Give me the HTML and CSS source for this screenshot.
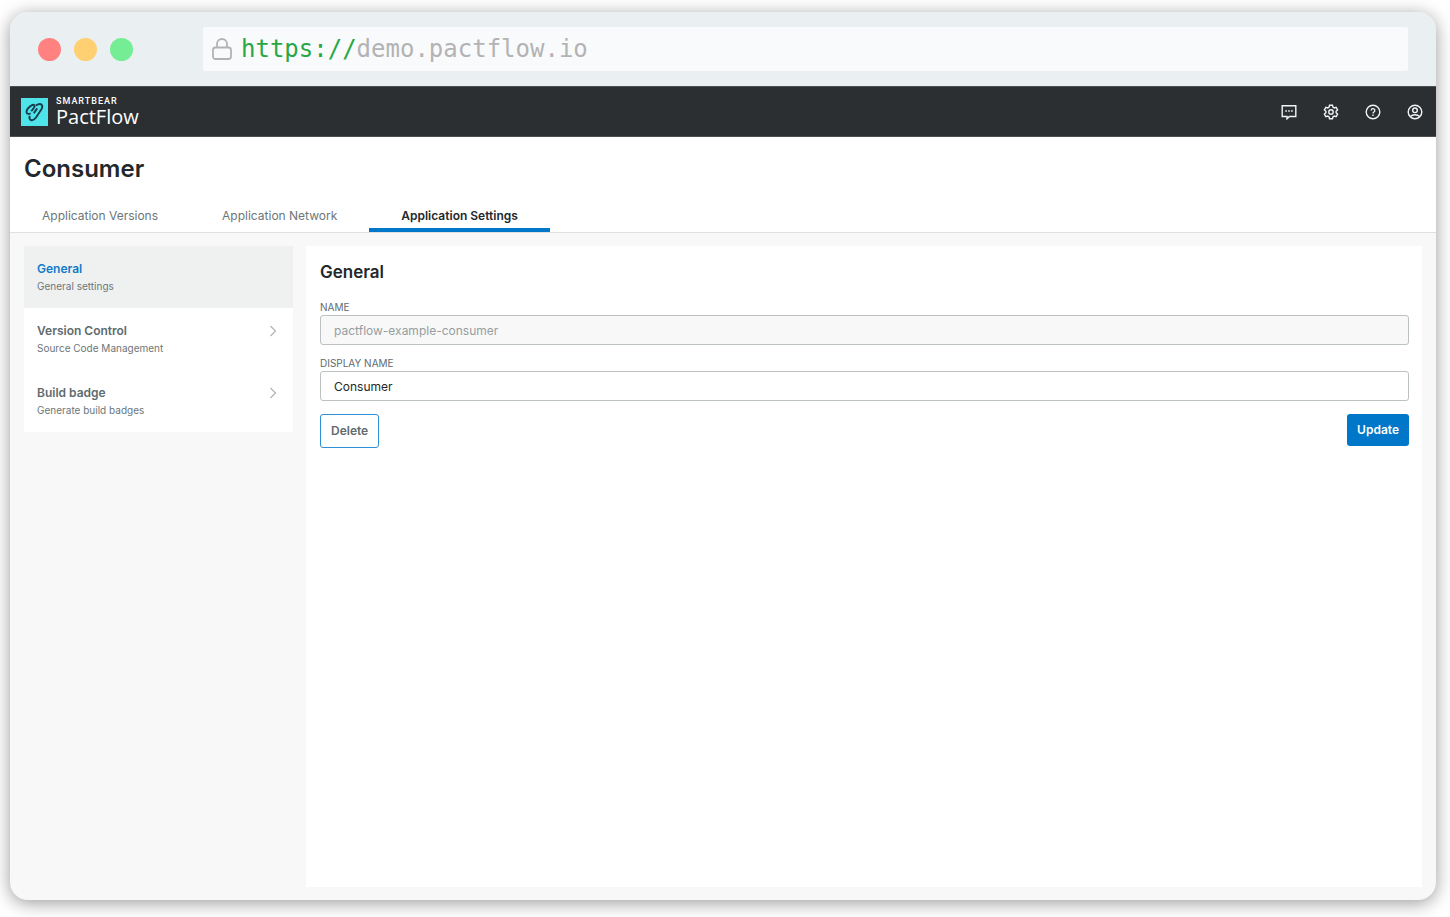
FILE: index.html
```html
<!DOCTYPE html>
<html lang="en">
<head>
<meta charset="utf-8">
<meta name="viewport" content="width=device-width, initial-scale=1">
<title>PactFlow – Consumer settings</title>
<link rel="stylesheet" href="styles.css">
</head>
<body>
<div class="window">
  <div class="chrome">
    <div class="lights"><span class="light red"></span><span class="light yellow"></span><span class="light green"></span></div>
    <div class="address">
      <svg class="lock" viewBox="0 0 20 22" fill="none" stroke="currentColor" stroke-width="1.8"><rect x="1" y="9.5" width="18" height="11.5" rx="2.5"/><path d="M5 9.5V6a5 5 0 0 1 10 0v3.500"/></svg>
      <span><span class="scheme">https://</span>demo.pactflow.io</span>
    </div>
  </div>
  <header class="topbar">
    <a class="brand" href="#">
      <svg class="mark" viewBox="0 0 27 28"><rect width="27" height="28" fill="#4fe3ea"/><g fill="none" stroke="#173f4c" stroke-width="1.9"><path d="M14.800 7.500Q18.500 5.200 20.300 6.400Q22.300 8 20.400 11.200L15.200 19.300Q12.200 23.400 9.600 21.900Q7.800 20.600 8.700 17.800"/><path d="M9.600 15.300Q6.500 16.800 5.600 14.600Q5 11.800 8.900 8.500Q12.300 5.900 13.400 7.300Q14.200 8.600 11.600 11.700L10.200 13.200"/><path d="M12.800 15.200L16.200 10.400"/></g></svg>
      <span class="brand-text"><span class="brand-small">SMARTBEAR</span><span class="brand-name">PactFlow</span></span>
    </a>
    <nav class="tools" aria-label="Tools">
      <button type="button" aria-label="Feedback"><svg viewBox="0 0 16 16"><path d="M1.200 1.700h13.600v10.800H8.400l-2.400 2.300v-2.300H1.200z"/><path d="M4.300 7h1.600M7.200 7h1.600M10.100 7h1.600"/></svg></button>
      <button type="button" aria-label="Settings"><svg viewBox="0 0 16 16"><path d="M6.500 1.200h3l.4 1.900 1.300.8 1.900-.6 1.500 2.600-1.500 1.300v1.600l1.500 1.300-1.500 2.600-1.900-.6-1.300.8-.4 1.900h-3l-.4-1.900-1.300-.8-1.900.6-1.500-2.600 1.500-1.300V7.200L1.400 5.900l1.500-2.600 1.900.6 1.300-.8z"/><circle cx="8" cy="8" r="2.200"/></svg></button>
      <button type="button" aria-label="Help"><svg viewBox="0 0 16 16"><circle cx="8" cy="8" r="6.800"/><path d="M6.200 6.500a1.800 1.800 0 1 1 2.700 1.500Q8 8.500 8 9.500M8 10.600v1.400"/></svg></button>
      <button type="button" aria-label="Account"><svg viewBox="0 0 16 16"><circle cx="8" cy="8" r="6.800"/><circle cx="8" cy="6.300" r="2.300"/><path d="M3.300 12.600Q5.200 10.800 8 10.800T12.700 12.600"/></svg></button>
    </nav>
  </header>
  <div class="heading">
    <h1>Consumer</h1>
    <nav class="tabs" aria-label="Application">
      <a class="tab" href="#">Application Versions</a>
      <a class="tab" href="#">Application Network</a>
      <a class="tab active" href="#" aria-current="page">Application Settings</a>
    </nav>
  </div>
  <div class="content">
    <nav class="side" aria-label="Settings">
      <a class="item selected" href="#"><span><strong>General</strong><small>General settings</small></span></a>
      <a class="item" href="#"><span><strong>Version Control</strong><small>Source Code Management</small></span><svg class="chevron" viewBox="0 0 8 12"><path d="M1.500 1l5 5-5 5"/></svg></a>
      <a class="item" href="#"><span><strong>Build badge</strong><small>Generate build badges</small></span><svg class="chevron" viewBox="0 0 8 12"><path d="M1.500 1l5 5-5 5"/></svg></a>
    </nav>
    <main class="panel">
      <h2>General</h2>
      <form>
        <label for="name">NAME</label>
        <input id="name" type="text" value="pactflow-example-consumer" disabled>
        <label for="display">DISPLAY NAME</label>
        <input id="display" type="text" value="Consumer">
        <div class="actions">
          <button class="delete" type="button">Delete</button>
          <button class="update" type="submit">Update</button>
        </div>
      </form>
    </main>
  </div>
</div>
</body>
</html>
```
FILE: styles.css
```css
* { box-sizing: border-box; }
body {
  margin: 0;
  min-height: 100vh;
  padding: 12px 14px 17px 10px;
  display: flex;
  background: #fff;
  color: #22282b;
  font: 12px/16px Inter, "Liberation Sans", sans-serif;
}
a { color: inherit; text-decoration: none; }
button, input { font: inherit; }
h1, h2 { margin: 0; font-weight: 600; }

.window {
  flex: 1;
  min-width: 0;
  display: flex;
  flex-direction: column;
  overflow: hidden;
  border-radius: 18px;
  background: #f8f8f8;
  box-shadow: 0 3px 18px rgba(0, 0, 0, .4);
}
.chrome {
  display: flex;
  align-items: center;
  gap: 70px;
  height: 74px;
  padding: 0 28px;
  background: #eaeff2;
}
.lights { display: flex; gap: 13px; }
.light { width: 23px; height: 23px; border-radius: 50%; }
.red { background: #ff8280; }
.yellow { background: #ffd071; }
.green { background: #74ed94; }
.address {
  flex: 1;
  display: flex;
  align-items: center;
  gap: 9px;
  height: 44px;
  padding: 0 9px;
  border-radius: 2px;
  background: #f9fafc;
  color: #b3b3b3;
  font: 24px/28px "DejaVu Sans Mono", monospace;
}
.lock { width: 20px; height: 22px; }
.scheme { color: #28a745; }

.topbar {
  display: flex;
  align-items: center;
  justify-content: space-between;
  height: 51px;
  padding: 0 13px 0 11px;
  border: 1px solid #4b5053;
  border-width: 1px 0;
  background: #2b2f32;
  color: #fff;
}
.brand { display: flex; align-items: center; gap: 8px; }
.mark { width: 27px; height: 28px; }
.brand-text { display: flex; flex-direction: column; font-family: "Open Sans", sans-serif; }
.brand-small { font-family: Roboto, sans-serif; font-size: 9px; line-height: 10px; font-weight: 500; letter-spacing: 1px; }
.brand-name { font-size: 20px; line-height: 21px; }
.tools { display: flex; gap: 26px; }
.tools button { display: flex; padding: 0; border: 0; background: none; color: #f2f3f3; }
.tools svg { width: 16px; height: 16px; fill: none; stroke: currentColor; stroke-width: 1.4; }

.heading { padding-top: 16px; background: #fff; border-bottom: 1px solid #dfe1e1; }
.heading h1 { padding-left: 14px; font-size: 24px; line-height: 32px; }
.tabs { display: flex; margin-top: 16px; }
.tab { padding: 7px 32px 4px; border-bottom: 4px solid transparent; color: #6c7679; }
.tab.active { border-color: #0077c8; color: #22282b; font-weight: 600; }

.content {
  flex: 1;
  display: flex;
  align-items: flex-start;
  gap: 13px;
  padding: 13px 14px;
}
.side { flex: 0 0 269px; background: #fff; }
.item { display: flex; justify-content: space-between; padding: 14px 16px 14px 13px; color: #6c7679; }
.item strong, .item small { display: block; }
.item strong { font-weight: 600; line-height: 18px; color: #5f6b6e; }
.item small { font-size: 10px; line-height: 16px; }
.item.selected { background: #eff1f1; }
.item.selected strong { color: #0f7bc9; }
.chevron { width: 8px; height: 12px; margin-top: 3px; fill: none; stroke: #aeb4b6; stroke-width: 1.2; }

.panel { flex: 1; min-width: 0; align-self: stretch; padding: 14px 13px 14px 14px; background: #fff; }
.panel h2 { margin-bottom: 15px; font-size: 17px; line-height: 24px; }
form { display: flex; flex-direction: column; }
label { font-size: 10px; line-height: 16px; color: #5f6b6e; }
input {
  height: 30px;
  margin-bottom: 10px;
  padding: 0 13px;
  border: 1px solid #bcc1c3;
  border-radius: 3px;
  background: #fff;
  color: #22282b;
}
input:disabled { background: #f8f8f8; color: #959ea1; }
.actions { display: flex; justify-content: space-between; align-items: flex-start; margin-top: 3px; }
.actions button { padding: 0 10px; border-radius: 3px; font-weight: 600; }
.delete { height: 34px; border: 1px solid #2d8fd5; background: #fff; color: #5f6b6e; }
.update { height: 32px; border: 0; background: #0077c8; color: #fff; }
```
